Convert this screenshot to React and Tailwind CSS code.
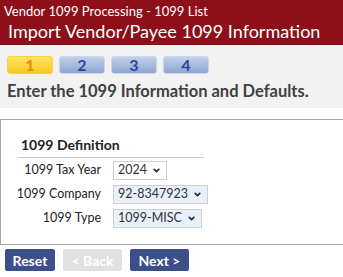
import { ChevronDown } from 'lucide-react'

const steps = ['1', '2', '3', '4']

function Select({ value, tinted }) {
  return (
    <div
      className={`flex h-[19px] items-center gap-[5px] whitespace-nowrap border border-[#cfcfcf] pl-[4px] pr-[5px] text-[12.5px] text-[#333] ${tinted ? 'bg-[#e8f0fb]' : 'bg-white'}`}
    >
      <span>{value}</span>
      <ChevronDown className="h-[9px] w-[9px]" strokeWidth={5} />
    </div>
  )
}

function Row({ label, children }) {
  return (
    <div className="flex items-center">
      <div className="w-[100px] whitespace-nowrap text-right text-[12.5px] text-[#222]">{label}</div>
      <div className="ml-[12px] flex">{children}</div>
    </div>
  )
}

export default function App() {
  return (
    <div className="h-[277px] w-[343px] overflow-hidden bg-white" style={{ fontFamily: 'Lato, sans-serif' }}>
      <div className="h-[45px] whitespace-nowrap bg-[#8c0f1a] px-[4px] pt-[3px] text-white">
        <div className="text-[13px] leading-[16px]">Vendor 1099 Processing - 1099 List</div>
        <div className="pl-[4px] text-[18px] leading-[25px]">Import Vendor/Payee 1099 Information</div>
      </div>

      <div className="h-[63px] bg-[#f2f2f2] px-[7px] pt-[11px]">
        <div className="flex gap-[6px]">
          {steps.map((s, i) => (
            <div
              key={s}
              className={`flex h-[18px] w-[46px] items-center justify-center rounded-[3px] border text-[16px] font-bold leading-none ${
                i === 0
                  ? 'border-[#f5d24a] bg-gradient-to-b from-[#ffe35c] to-[#f8c817] text-[#e38b0a]'
                  : 'border-[#cdd6ea] bg-gradient-to-b from-[#c3d0ea] to-[#8fa5d1] text-[#284a9c]'
              }`}
            >
              {s}
            </div>
          ))}
        </div>
        <div className="mt-[5px] whitespace-nowrap text-[16.5px] font-bold text-[#404040]">Enter the 1099 Information and Defaults.</div>
      </div>

      <div className="mt-[11px] h-[126px] border-y border-l border-[#a6a6a6] pl-[17px] pt-[14px]">
        <div className="w-[186px] border-b border-[#c8c8c8] pb-[2px] pl-[3px] text-[14px] font-bold text-[#222]">
          1099 Definition
        </div>
        <div className="-ml-[17px] mt-[3px] flex flex-col gap-[5px]">
          <Row label="1099 Tax Year">
            <Select value="2024" />
          </Row>
          <Row label="1099 Company">
            <Select value="92-8347923" tinted />
          </Row>
          <Row label="1099 Type">
            <Select value="1099-MISC" tinted />
          </Row>
        </div>
      </div>

      <div className="mt-[4px] flex gap-[8px] px-[5px]">
        <button className="h-[22px] w-[50px] rounded-[2px] bg-[#3d4f8b] text-[14px] font-bold text-white">Reset</button>
        <button className="h-[22px] w-[59px] rounded-[2px] bg-[#e1e1e1] text-[14px] font-bold text-white">&lt; Back</button>
        <button className="h-[22px] w-[59px] rounded-[2px] bg-[#3d4f8b] text-[14px] font-bold text-white">Next &gt;</button>
      </div>
    </div>
  )
}
